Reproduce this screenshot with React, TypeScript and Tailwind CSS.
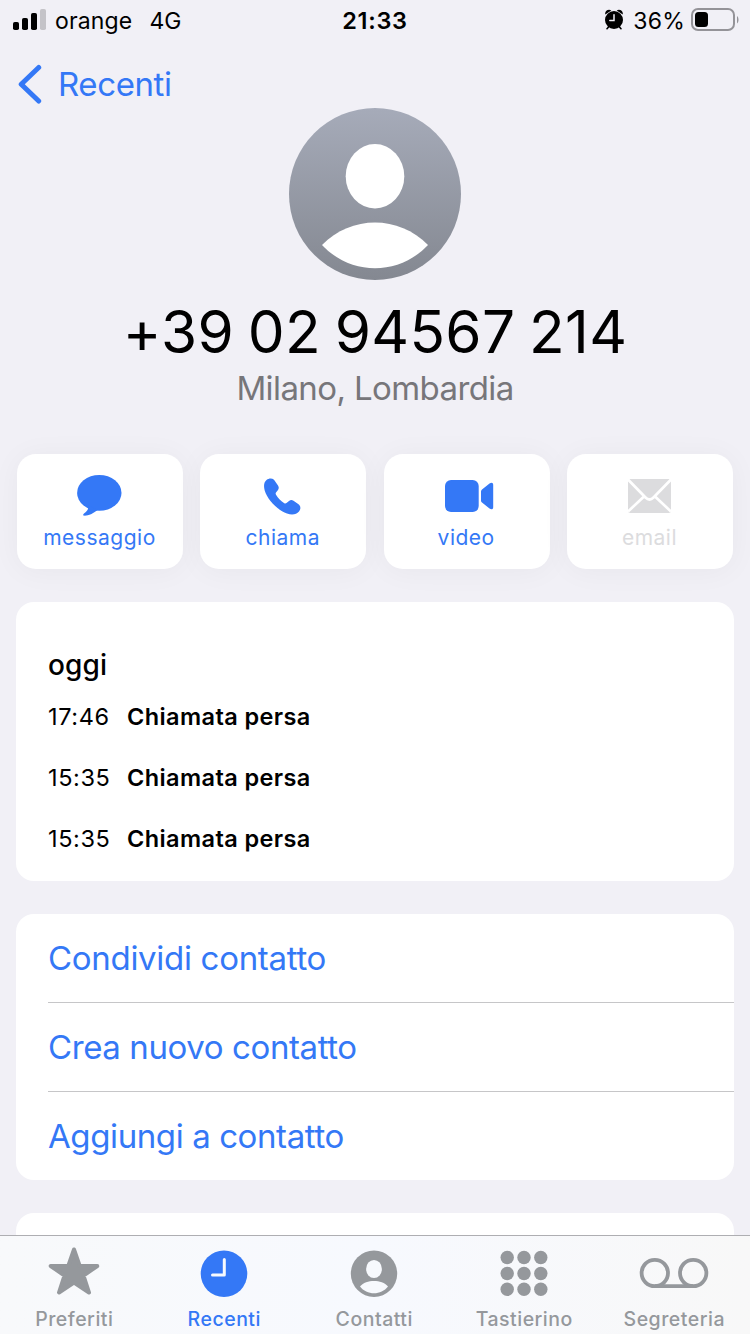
import type { ReactNode } from "react";

const CALLS = [
  { time: "17:46", kind: "Chiamata persa" },
  { time: "15:35", kind: "Chiamata persa" },
  { time: "15:35", kind: "Chiamata persa" },
];

const LINKS = [
  { label: "Condividi contatto", spacing: "tracking-[-0.3px]" },
  { label: "Crea nuovo contatto", spacing: "tracking-[-0.4px]" },
  { label: "Aggiungi a contatto", spacing: "tracking-[-0.4px]" },
];

function StatusBar() {
  return (
    <div className="flex h-10 shrink-0 items-center justify-between pr-[11px] pl-[13px] text-[23px] leading-[40px]">
      <div className="flex w-[290px] items-center">
        <svg width="33" height="22" viewBox="0 0 33 22" className="mr-[9px]">
          <rect x="0" y="13" width="6" height="8" rx="1.8" />
          <rect x="9" y="9" width="6" height="12" rx="1.8" />
          <rect x="18" y="4" width="6" height="17" rx="1.8" />
          <rect x="27" y="0" width="6" height="21" rx="1.8" fill="#c4c3c8" />
        </svg>
        <span className="pt-0.5 tracking-[0.15px]">orange</span>
        <span className="ml-[17px] pt-0.5">4G</span>
      </div>
      <span className="pt-0.5 pr-0.5 text-[23.5px] font-semibold tracking-[0.7px]">21:33</span>
      <div className="flex w-[290px] items-center justify-end">
        <svg width="18" height="22" viewBox="0 0 18 22" className="mr-2.5">
          <path d="M0.300 5.500C-.600 2 3.500-.500 6.300 1.500ZM17.700 5.500C18.600 2 14.500-.500 11.700 1.500Z" />
          <path d="M4 17.500l-2 2.200M14 17.500l2 2.200" stroke="#000" strokeWidth="1.600" strokeLinecap="round" />
          <circle cx="9" cy="11" r="9" />
          <path d="M9 5.800v5.700H4.800" fill="none" stroke="#f1f0f6" strokeWidth="1.500" strokeLinecap="round" />
        </svg>
        <span className="pt-0.5 tracking-[0.2px]">36%</span>
        <svg width="48" height="24" viewBox="0 0 48 24" className="ml-1.5">
          <rect x="1" y="1" width="42" height="21" rx="6" fill="none" stroke="#949398" strokeWidth="2" />
          <rect x="4" y="4" width="13" height="15" rx="3.5" />
          <path d="M46 8c2 1.500 2 6 0 7.500z" fill="#949398" />
        </svg>
      </div>
    </div>
  );
}

function Action({ label, icon, disabled }: { label: string; icon: ReactNode; disabled?: boolean }) {
  return (
    <button
      className={`flex h-[115px] w-[166px] flex-col items-center rounded-[19px] bg-white shadow-[0_2px_30px_rgba(0,0,0,0.045)] ${
        disabled ? "text-[#dcdcde]" : "text-[#3478f6]"
      }`}
    >
      <span className="flex h-[68px] items-end">{icon}</span>
      <span className="pt-px pr-px text-[21px] leading-[30px] tracking-[0.5px]">{label}</span>
    </button>
  );
}

function Tab({ label, icon, active }: { label: string; icon: ReactNode; active?: boolean }) {
  return (
    <button className={`flex w-[150px] flex-col items-center pr-[1.5px] ${active ? "text-[#3478f6]" : "text-[#95989c]"}`}>
      {icon}
      <span className="mt-[9px] text-[19.5px] leading-[26px] font-medium tracking-[0.5px]">{label}</span>
    </button>
  );
}

const bubbleIcon = (
  <svg width="47" height="48" viewBox="0 0 47 48" fill="currentColor">
    <ellipse cx="22.300" cy="18.900" rx="22.200" ry="17.900" />
    <path d="M10 31c2 3 1.500 5-3 8.500-1.500 1.200-.800 2.200.700 2.200 4 0 8.500-2.200 13-5.700z" />
  </svg>
);

const phoneIcon = (
  <svg width="39" height="44" viewBox="0 0 39 44" fill="currentColor">
    <path d="M2.500 2C5 0 8 0 10 1.800L14 7.500C15 9.300 15 10.500 14 12L12 14.500C11.500 15.300 11.500 15.800 12 16.700C14 20 17 23 20.300 25.200C21.200 25.800 21.700 25.700 22.500 25.100L25 23C26.500 21.800 27.800 21.700 29.500 22.800L34.500 26.300C36.800 28 37 31 35 33.500C32.500 36.500 28 37.500 23 35.500C12.500 31.500 3.500 21.500.700 12.500C-.600 8 0 4 2.500 2Z" />
  </svg>
);

const videoIcon = (
  <svg width="49" height="42" viewBox="0 0 49 42" fill="currentColor">
    <rect x="0" y="0" width="33.700" height="32" rx="6" />
    <path d="M36 11.500a2.500 2.500 0 0 1 1-2l7.500-6c2-1.500 3.700-.800 3.700 1.300v22.400c0 2.100-1.700 2.800-3.700 1.300l-7.500-6a2.500 2.500 0 0 1-1-2z" />
  </svg>
);

const mailIcon = (
  <svg width="43" height="43" viewBox="0 0 43 43">
    <rect width="43" height="34" rx="2.500" fill="currentColor" />
    <path d="M0 0.500l17.500 18q4 4 8 0L43 0.500M0 32.500l16-15M43 32.500l-16-15" fill="none" stroke="#fff" strokeWidth="2.700" />
  </svg>
);

const starIcon = (
  <svg width="52" height="52" viewBox="0 0 52 52" fill="currentColor" stroke="currentColor" strokeWidth="4" strokeLinejoin="round">
    <path d="M26 4.500l5.700 16.500h17.600L35.500 30.500l5.500 17L26 37.500 11 47.500 16.500 30.500 2.700 21h17.600z" />
  </svg>
);

const clockIcon = (
  <svg width="52" height="52" viewBox="0 0 52 52">
    <circle cx="26" cy="28.700" r="23.300" fill="currentColor" />
    <path d="M26.300 14.500V30H14.500" fill="none" stroke="#f7f9fd" strokeWidth="3" strokeLinecap="round" strokeLinejoin="round" />
  </svg>
);

const personIcon = (
  <svg width="52" height="52" viewBox="0 0 52 52">
    <circle cx="26" cy="28.700" r="23.200" fill="currentColor" />
    <ellipse cx="26" cy="24" rx="7.900" ry="9.100" fill="#f7f9fd" />
    <path d="M12 41.500C18.200 34.300 33.700 34.300 40 41.500C33.200 50.500 18.700 50.500 12 41.500z" fill="#f7f9fd" />
  </svg>
);

const keypadIcon = (
  <svg width="52" height="52" viewBox="0 0 52 52" fill="currentColor">
    {[12.500, 28.500, 44.300].map((y) =>
      [9.200, 26, 42.800].map((x) => <circle key={`${x}-${y}`} cx={x} cy={y} r="6.700" />)
    )}
  </svg>
);

const voicemailIcon = (
  <svg width="70" height="52" viewBox="0 0 70 52" fill="none" stroke="currentColor" strokeWidth="3.800">
    <circle cx="15.800" cy="28" r="13.200" />
    <circle cx="54.200" cy="28" r="13.200" />
    <path d="M15.800 41.200h38.400" />
  </svg>
);

export default function App() {
  return (
    <div className="flex h-[1334px] w-[750px] flex-col overflow-hidden bg-[#f1f0f6] font-['Inter',sans-serif] text-black">
      <StatusBar />

      <nav className="flex h-[68px] shrink-0 items-center pt-5 pl-[18px] text-[#3478f6]">
        <svg width="24" height="40" viewBox="0 0 24 40" fill="none">
          <path d="M20.700 3.500L3.200 20.200L20.700 37" stroke="currentColor" strokeWidth="5" strokeLinecap="round" strokeLinejoin="round" />
        </svg>
        <span className="ml-4 text-[33px] leading-10 tracking-[-0.4px]">Recenti</span>
      </nav>

      <main className="flex min-h-0 flex-1 flex-col overflow-hidden">
        <header className="flex h-[346px] shrink-0 flex-col items-center">
          <svg width="172" height="172" viewBox="0 0 172 172">
            <defs>
              <linearGradient id="avatar" x1="0" y1="0" x2="0" y2="1">
                <stop offset="0" stopColor="#a6abb9" />
                <stop offset="1" stopColor="#848891" />
              </linearGradient>
            </defs>
            <circle cx="86" cy="86" r="86" fill="url(#avatar)" />
            <ellipse cx="86" cy="68.300" rx="29.300" ry="32.200" fill="#fff" />
            <path d="M33 137C62 107 110 107 139 137C110 168 62 168 33 137Z" fill="#fff" />
          </svg>
          <h1 className="mt-4 text-[58.5px] leading-[72px] tracking-[0.3px] whitespace-nowrap [word-spacing:-3px]">+39 02 94567 214</h1>
          <p className="text-[33px] leading-10 tracking-[-0.6px] text-[#77767a]">Milano, Lombardia</p>
        </header>

        <div className="flex shrink-0 justify-between px-[17px]">
          <Action label="messaggio" icon={bubbleIcon} />
          <Action label="chiama" icon={phoneIcon} />
          <Action label="video" icon={<span className="pl-1.5">{videoIcon}</span>} />
          <Action label="email" icon={mailIcon} disabled />
        </div>

        <section className="z-10 mx-4 mt-[33px] h-[279px] shrink-0 rounded-[18px] bg-white px-8 pt-[43px]">
          <h2 className="text-[28px] leading-10 font-medium tracking-[0.1px]">oggi</h2>
          <ul className="pt-px text-[23.5px]">
            {CALLS.map((c, i) => (
              <li key={i} className="flex h-[61px] items-center">
                <span className="w-[79px] tracking-[0.6px]">{c.time}</span>
                <span className="font-semibold tracking-[0.4px]">{c.kind}</span>
              </li>
            ))}
          </ul>
        </section>

        <section className="mx-4 mt-[33px] h-[266px] shrink-0 rounded-[18px] bg-white pl-8">
          {LINKS.map((l, i) => (
            <button
              key={l.label}
              className={`flex h-[89px] w-full items-center text-[33px] text-[#3478f6] ${l.spacing} ${
                i < LINKS.length - 1 ? "border-b border-[#c6c6c8] pt-0.5" : ""
              }`}
            >
              {l.label}
            </button>
          ))}
        </section>

        <section className="mx-4 mt-[33px] h-[100px] shrink-0 rounded-[18px] bg-white" />
      </main>

      <footer className="flex h-[99px] shrink-0 items-start border-t border-[#aeaeb2] bg-linear-to-r from-[#f8f9fb] via-[#f7f9fe] to-[#f8f8f8] pt-[9px]">
        <Tab label="Preferiti" icon={starIcon} />
        <Tab label="Recenti" icon={clockIcon} active />
        <Tab label="Contatti" icon={personIcon} />
        <Tab label="Tastierino" icon={keypadIcon} />
        <Tab label="Segreteria" icon={voicemailIcon} />
      </footer>
    </div>
  );
}
